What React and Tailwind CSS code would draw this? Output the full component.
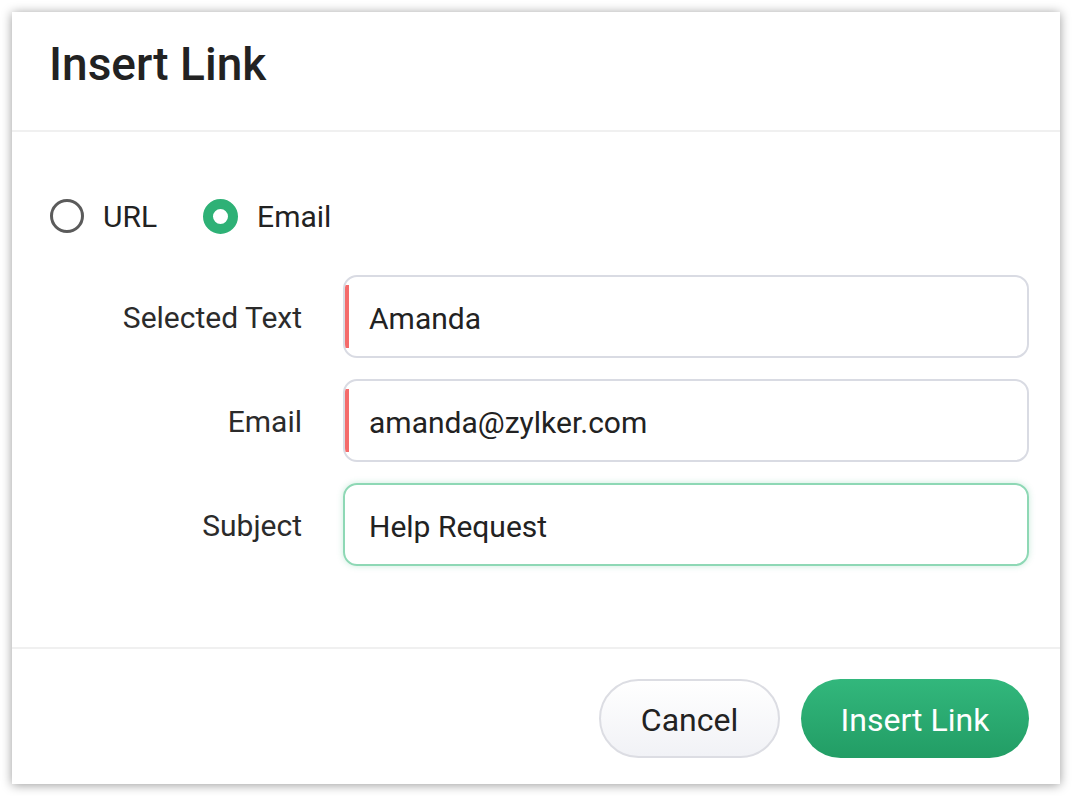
import React from "react";

const Field = ({ label, value, invalid, focused }) => (
  <div className="flex items-center">
    <label className="w-[253px] pr-[1px] pt-[1px] text-right text-[30px] text-[#2b2b2b] shrink-0">
      {label}
    </label>
    <div
      className={`ml-[40px] flex-1 h-[83px] rounded-[14px] border-2 flex items-center overflow-hidden relative ${
        focused
          ? "border-[#8ed8b5] shadow-[0_0_6px_rgba(46,177,118,0.25)]"
          : "border-[#d9dbe3]"
      }`}
    >
      {invalid && (
        <div className="absolute left-0 top-[8px] bottom-[8px] w-[4px] bg-[#f46b6b]" />
      )}
      <span className="pl-[24px] pt-[4px] text-[30px] text-[#222]">{value}</span>
    </div>
  </div>
);

export default function App() {
  return (
    <div
      className="w-[1072px] h-[796px] bg-white p-[12px]"
      style={{ fontFamily: "Roboto, 'Liberation Sans', sans-serif" }}
    >
      <div className="w-full h-full bg-white flex flex-col shadow-[0_1px_10px_rgba(0,0,0,0.4)]">
        {/* header */}
        <div className="h-[120px] flex items-center px-[37px] border-b-2 border-[#f0f0f0] shrink-0">
          <h1 className="text-[46px] font-medium text-[#222] -mt-[13px]">Insert Link</h1>
        </div>

        {/* body */}
        <div className="flex-1 pl-[38px] pr-[31px] pt-[67px]">
          <div className="flex items-center h-[34px] gap-[19px]">
            <span className="w-[34px] h-[34px] rounded-full border-[3.5px] border-[#5b5b5b] shrink-0" />
            <span className="text-[30px] text-[#222] mr-[27px]">URL</span>
            <span className="w-[35px] h-[35px] rounded-full border-[10px] border-[#2eb176] bg-white shrink-0" />
            <span className="text-[30px] text-[#222]">Email</span>
          </div>

          <div className="mt-[42px] flex flex-col gap-[21px]">
            <Field label="Selected Text" value="Amanda" invalid />
            <Field label="Email" value="amanda@zylker.com" invalid />
            <Field label="Subject" value="Help Request" focused />
          </div>
        </div>

        {/* footer */}
        <div className="h-[137px] border-t-2 border-[#f0f0f0] flex items-center justify-end gap-[21px] pr-[31px] pt-[4px] shrink-0">
          <button className="w-[181px] h-[79px] rounded-full border-2 border-[#dcdde3] bg-gradient-to-b from-white to-[#f1f2f6] text-[32px] text-[#222] pt-[2px]">
            Cancel
          </button>
          <button className="w-[228px] h-[79px] rounded-full bg-gradient-to-b from-[#32b77c] to-[#229d65] text-[32px] text-white pt-[2px]">
            Insert Link
          </button>
        </div>
      </div>
    </div>
  );
}
